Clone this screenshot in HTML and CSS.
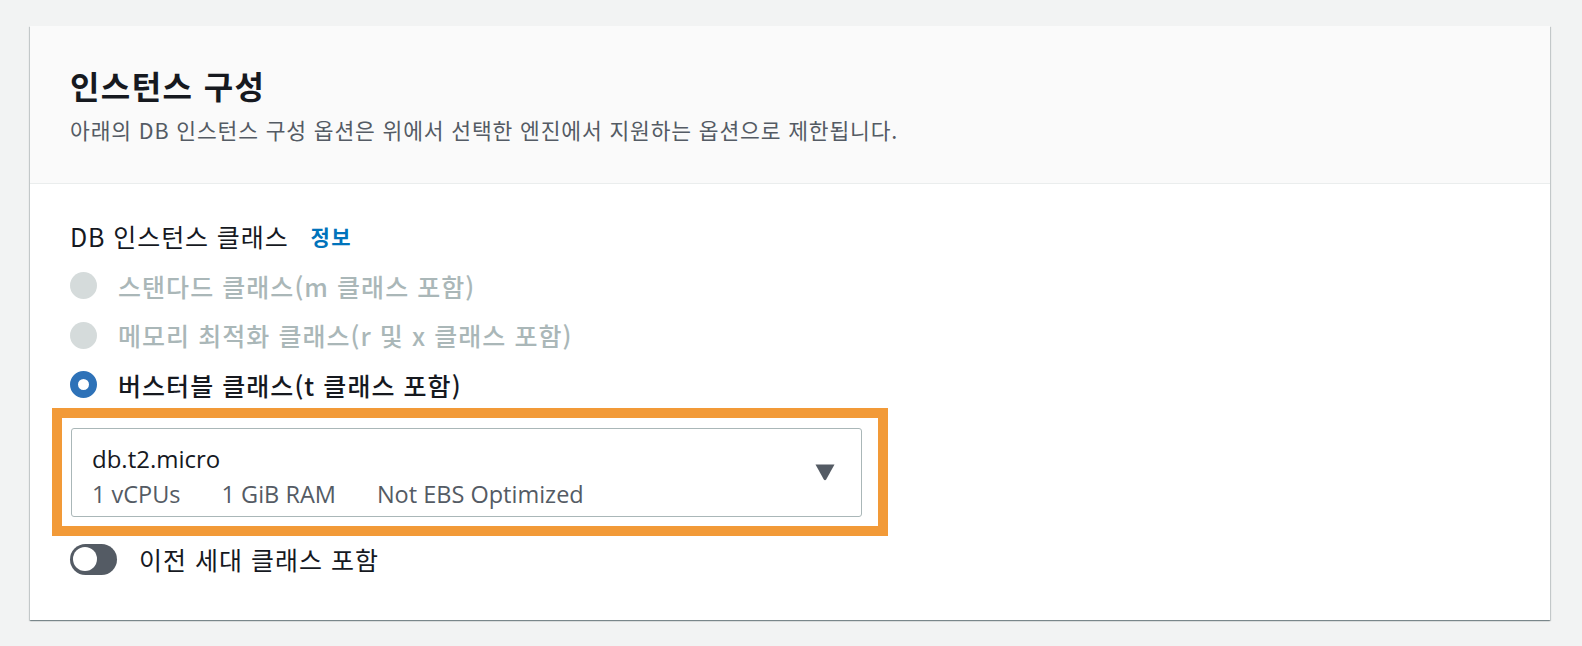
FILE: index.html
```html
<!DOCTYPE html>
<html lang="ko">
<head>
<meta charset="utf-8">
<link rel="stylesheet" href="styles.css">
</head>
<body>
<section class="card">
  <header class="card-header">
    <h2 class="title">인스턴스 구성</h2>
    <p class="subtitle">아래의 DB 인스턴스 구성 옵션은 위에서 선택한 엔진에서 지원하는 옵션으로 제한됩니다.</p>
  </header>
  <div class="card-body">
    <div class="field-label"><span>DB 인스턴스 클래스</span><a class="info">정보</a></div>
    <div class="radios">
      <div class="radio disabled"><span class="dot"></span><span class="rlabel">스탠다드 클래스(m 클래스 포함)</span></div>
      <div class="radio disabled"><span class="dot"></span><span class="rlabel">메모리 최적화 클래스(r 및 x 클래스 포함)</span></div>
      <div class="radio checked"><span class="dot"></span><span class="rlabel">버스터블 클래스(t 클래스 포함)</span></div>
    </div>
    <div class="highlight">
      <div class="select">
        <div class="select-text">
          <div class="select-main">db.t2.micro</div>
          <div class="select-tags"><span>1 vCPUs</span><span>1 GiB RAM</span><span>Not EBS Optimized</span></div>
        </div>
        <svg class="caret" width="20" height="17" viewBox="0 0 20 17"><path d="M0.5 0.5 L19.5 0.5 L11.2 15.6 Q10 17 8.8 15.6 Z" fill="#545b64"/></svg>
      </div>
    </div>
    <div class="toggle-row">
      <span class="toggle"><span class="knob"></span></span>
      <span class="tlabel">이전 세대 클래스 포함</span>
    </div>
  </div>
</section>
</body>
</html>
```
FILE: styles.css
```css
* { box-sizing: border-box; }
html, body { margin: 0; padding: 0; }
body {
  background: #f2f3f3;
  font-family: "Noto Sans CJK KR", "Noto Sans", sans-serif;
  color: #16191f;
  width: 1582px;
  height: 646px;
  overflow: hidden;
}
.card {
  margin: 26px 0 0 30px;
  width: 1520px;
  height: 594px;
  background: #fff;
  box-shadow: 0 1px 1px 0 rgba(0,28,36,0.3), 1px 1px 1px 0 rgba(0,28,36,0.15), -1px 1px 1px 0 rgba(0,28,36,0.15);
}
.card-header {
  background: #fafafa;
  border-bottom: 1px solid #eaeded;
  height: 158px;
  padding: 40px 40px 0 40px;
}
.title {
  margin: 0;
  font-size: 32px;
  line-height: 38px;
  font-weight: 700;
  letter-spacing: 1.4px;
  color: #16191f;
}
.subtitle {
  margin: 13px 0 0 0;
  font-size: 21.5px;
  line-height: 26px;
  letter-spacing: 0.85px;
  color: #545b64;
}
.card-body {
  padding: 37px 40px 0 40px;
}
.field-label {
  display: flex;
  align-items: center;
  font-size: 25px;
  line-height: 30px;
  letter-spacing: 0.9px;
  color: #16191f;
}
.info {
  color: #0073bb;
  font-weight: 700;
  font-size: 21px;
  letter-spacing: 1.5px;
  margin-left: 22px;
}
.radios {
  margin-top: 10px;
  display: flex;
  flex-direction: column;
}
.radio {
  height: 49.5px;
  display: flex;
  align-items: center;
}
.dot {
  width: 27px;
  height: 27px;
  border-radius: 50%;
  flex: none;
}
.radio.disabled .dot { background: #d5dbdb; }
.radio.checked .dot { background: #fff; border: 8px solid #2e72b8; }
.rlabel {
  margin-left: 21px;
  font-size: 25px;
  line-height: 30px;
  letter-spacing: 1.05px;
  font-weight: 500;
}
.radio.disabled .rlabel { color: #aab7b8; }
.radio.checked .rlabel { color: #16191f; }
.highlight {
  margin: -2px 0 0 -18px;
  width: 836px;
  border: 10px solid #f29a38;
  padding: 10px 16px 9px 9px;
  background: #fff;
}
.select {
  height: 89px;
  border: 1px solid #aab7b8;
  border-radius: 3px;
  display: flex;
  align-items: flex-start;
  justify-content: space-between;
  padding: 14px 26px 0 20px;
}
.select-main {
  font-family: "Open Sans", "Noto Sans", sans-serif;
  font-size: 24px;
  line-height: 32px;
  color: #16191f;
}
.select-tags {
  font-family: "Open Sans", "Noto Sans", sans-serif;
  font-size: 23.5px;
  line-height: 30px;
  color: #545b64;
  display: flex;
  gap: 41px;
  margin-top: 4px;
}
.caret { align-self: center; margin-top: -14px; }
.toggle-row {
  margin-top: 8px;
  display: flex;
  align-items: center;
}
.toggle {
  width: 47px;
  height: 31px;
  border-radius: 16px;
  background: #545b64;
  display: flex;
  align-items: center;
  padding-left: 3px;
  flex: none;
}
.knob {
  width: 24px;
  height: 24px;
  border-radius: 50%;
  background: #fff;
}
.tlabel {
  margin-left: 22px;
  font-size: 25px;
  line-height: 30px;
  letter-spacing: 1px;
  color: #16191f;
}
```
